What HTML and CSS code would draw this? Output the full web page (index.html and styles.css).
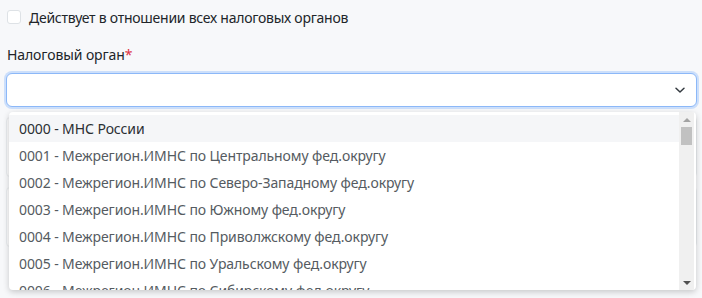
FILE: index.html
```html
<!DOCTYPE html>
<html lang="ru">

<head>
    <meta charset="UTF-8">
    <meta name="viewport" content="width=device-width, initial-scale=1.0">
    <title>Налоговый орган</title>
    <link rel="stylesheet" href="styles.css">
</head>

<body>
    <div class="form">
        <label class="check-row">
            <span class="checkbox"></span>
            <span>Действует в отношении всех налоговых органов</span>
        </label>

        <div class="field">
            <div class="field-label">Налоговый орган<span class="required">*</span></div>
            <div class="select">
                <span class="select-value"></span>
                <svg class="chevron" width="12" height="12" viewBox="0 0 12 12">
                    <path d="M2 4.2 L6 8 L10 4.2" fill="none" stroke="#343a40" stroke-width="1.5" stroke-linecap="round" stroke-linejoin="round" />
                </svg>
            </div>
        </div>

        <div class="under-card"></div>
        <div class="under-card"></div>

        <div class="dropdown">
            <ul class="options">
                <li class="active">0000 - МНС России</li>
                <li>0001 - Межрегион.ИМНС по Центральному фед.округу</li>
                <li>0002 - Межрегион.ИМНС по Северо-Западному фед.округу</li>
                <li>0003 - Межрегион.ИМНС по Южному фед.округу</li>
                <li>0004 - Межрегион.ИМНС по Приволжскому фед.округу</li>
                <li>0005 - Межрегион.ИМНС по Уральскому фед.округу</li>
                <li>0006 - Межрегион.ИМНС по Сибирскому фед.округу</li>
            </ul>
            <div class="scrollbar">
                <div class="sb-btn"><span class="arrow-up"></span></div>
                <div class="sb-track">
                    <div class="sb-thumb"></div>
                </div>
                <div class="sb-btn"><span class="arrow-down"></span></div>
            </div>
        </div>
    </div>
</body>

</html>
```

FILE: styles.css
```css
html,
body {
    height: 100%;
}

body {
    font-family: 'Noto Sans', 'Open Sans', sans-serif;
    background-color: #f7f8fa;
    color: #212529;
    margin: 0;
    font-size: 14px;
    letter-spacing: -0.1px;
}

.form {
    position: relative;
    min-height: 100%;
    padding: 0 5px 0 6px;
}

.check-row {
    display: flex;
    align-items: center;
    gap: 8px;
    height: 34px;
    padding-left: 1px;
    letter-spacing: -0.25px;
}

.checkbox {
    width: 12px;
    height: 12px;
    border: 1px solid #dee2e6;
    border-radius: 3px;
    background: #ffffff;
}

.field {
    margin-top: 11px;
}

.field-label {
    line-height: 20px;
    padding-left: 1px;
    margin-bottom: 8px;
}

.required {
    color: #dc3545;
}

.select {
    display: flex;
    align-items: center;
    justify-content: space-between;
    height: 32px;
    background: #ffffff;
    border: 1px solid #8cb8f8;
    border-radius: 6px;
    box-shadow: 0 0 0 2px rgba(13, 110, 253, 0.18);
    padding: 0 12px;
}

.chevron {
    margin-right: -2px;
}

.under-card {
    height: 58px;
    margin-top: 10px;
    background: #fbfbfc;
    border: 1px solid #e9ecef;
    border-radius: 4px;
}

/* open list of the select */
.dropdown {
    position: absolute;
    top: 112px;
    left: 9px;
    width: 687px;
    height: 178px;
    display: flex;
    background: #ffffff;
    border-radius: 4px;
    box-shadow: 0 2px 6px rgba(0, 0, 0, 0.2);
    overflow: hidden;
}

.options {
    flex: 1;
    margin: 0;
    padding: 3px 0 0;
    list-style: none;
    overflow: hidden;
}

.options li {
    height: 27px;
    line-height: 27px;
    padding-left: 10px;
    color: #555b61;
    white-space: nowrap;
}

.options li.active {
    background: #f5f6f8;
    color: #2b2f33;
}

.scrollbar {
    width: 15px;
    margin-right: 2px;
    display: flex;
    flex-direction: column;
    background: #f0f0f0;
}

.sb-btn {
    height: 15px;
    display: flex;
    align-items: center;
    justify-content: center;
}

.sb-track {
    flex: 1;
}

.sb-thumb {
    height: 18px;
    margin: 0 2px;
    background: #c1c1c1;
}

.arrow-up,
.arrow-down {
    width: 0;
    height: 0;
    border-left: 4px solid transparent;
    border-right: 4px solid transparent;
}

.arrow-up {
    border-bottom: 4px solid #a3a3a3;
}

.arrow-down {
    border-top: 4px solid #505050;
}
```
